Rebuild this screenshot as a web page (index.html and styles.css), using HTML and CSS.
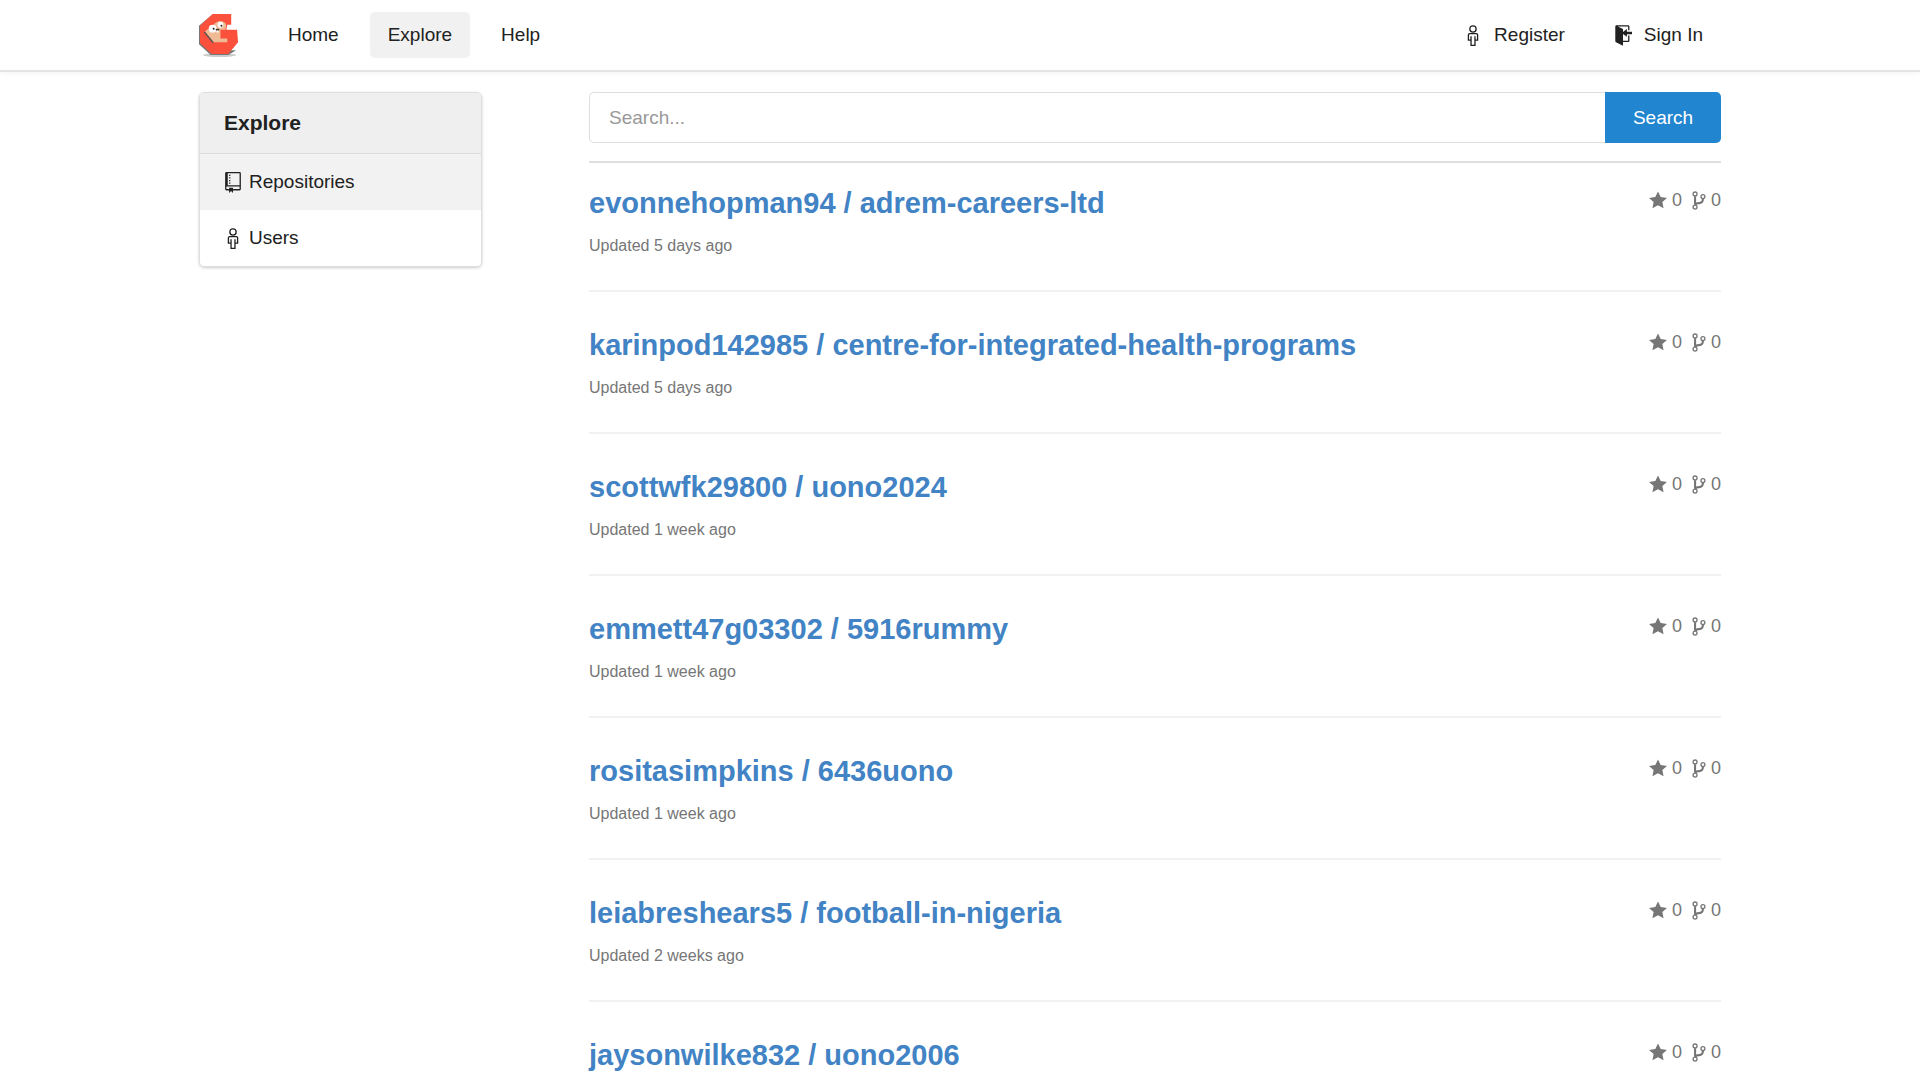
FILE: index.html
```html
<!DOCTYPE html>
<html lang="en">
<head>
  <meta charset="UTF-8" />
  <meta name="viewport" content="width=device-width, initial-scale=1.0" />
  <title>Explore - Gogs</title>
  <link rel="stylesheet" href="styles.css">
</head>
<body>
  <svg class="sprite" aria-hidden="true">
    <symbol id="person" viewBox="0 0 12 16">
      <g fill="none" stroke="currentColor">
        <circle cx="6" cy="3" r="2.4" />
        <path d="M3.5 6.5h5c.6 0 1 .4 1 1v4h-2v4h-3v-4h-2v-4c0-.6.4-1 1-1zM4.5 8.5v3M7.5 8.5v3" />
      </g>
    </symbol>
    <symbol id="sign-in" viewBox="0 0 14 16">
      <path d="M7 6.75V12h4V8h1v4c0 .55-.45 1-1 1H7v3l-5.45-2.72c-.33-.17-.55-.52-.55-.91V1c0-.55.45-1 1-1h9c.55 0 1 .45 1 1v3h-1V1H3l4 2v2.25L10 3v2h4v2h-4v2z" />
    </symbol>
    <symbol id="repo" viewBox="0 0 12 16">
      <path d="M4 9H3V8h1v1zm0-3H3v1h1V6zm0-2H3v1h1V4zm0-2H3v1h1V2zm8-1v12c0 .55-.45 1-1 1H6v2l-1.5-1.5L3 16v-2H1c-.55 0-1-.45-1-1V1c0-.55.45-1 1-1h10c.55 0 1 .45 1 1zm-1 10H1v2h2v-1h3v1h5v-2zm0-10H2v9h9V1z" />
    </symbol>
    <symbol id="star" viewBox="0 0 14 16">
      <path d="M14 6l-4.9-.64L7 1 4.9 5.36 0 6l3.6 3.26L2.67 14 7 11.67 11.33 14l-.93-4.74z" />
    </symbol>
    <symbol id="branch" viewBox="0 0 10 16">
      <g fill="none" stroke="currentColor">
        <circle cx="2" cy="3" r="1.5" />
        <circle cx="8" cy="5" r="1.5" />
        <circle cx="2" cy="13" r="1.5" />
        <path stroke-width="1.6" d="M2 4.7v6.6M8 6.7c0 2-1.3 3.3-3 3.3-1.5 0-2.500.4-3 1.400" />
      </g>
    </symbol>
  </svg>

  <header class="navbar">
    <nav class="container nav">
      <a href="#" class="brand" aria-label="Gogs">
        <svg class="logo" viewBox="0 0 42 46">
          <ellipse cx="21" cy="43" rx="17" ry="2" fill="#ccc" />
          <path fill="#777" d="M13 2 0 13v19l12 11h18l8-5H13z" />
          <path fill="#fb503c" d="M14 1h19v11h-4l-1 5h11l1 13-10 12H13L1 31V13z" />
          <path fill="#efba94" d="M15 12c4-5 10-5 13 0l-1 5h-5v9h7v4H15L6 19z" />
          <path fill="#555" d="m6 19 9 11-1 1-9-11z" />
          <circle cx="14" cy="16" r="4" fill="#fff" />
          <circle cx="22" cy="12" r="3" fill="#fff" />
          <circle cx="15" cy="16" r="1" fill="#222" />
          <circle cx="23" cy="13" r="1" fill="#222" />
          <ellipse cx="19" cy="17" rx="2" ry="1" fill="#333" />
          <path fill="#fff" d="M18 18h2v2h-2z" />
        </svg>
      </a>
      <a href="#" class="item">Home</a>
      <a href="#" class="item active">Explore</a>
      <a href="#" class="item">Help</a>
      <div class="right">
        <a href="#" class="item"><svg class="icon"><use href="#person" /></svg> Register</a>
        <a href="#" class="item"><svg class="icon"><use href="#sign-in" /></svg> Sign In</a>
      </div>
    </nav>
  </header>

  <div class="container explore">
    <aside class="menu">
      <h4 class="menu-header">Explore</h4>
      <a href="#" class="menu-item active"><svg class="icon"><use href="#repo" /></svg> Repositories</a>
      <a href="#" class="menu-item"><svg class="icon"><use href="#person" /></svg> Users</a>
    </aside>

    <main>
      <form class="search">
        <input type="text" name="q" placeholder="Search..." aria-label="Search">
        <button type="submit">Search</button>
      </form>
      <div class="list">
        <div class="repo">
          <div class="repo-header">
            <a href="#" class="name">evonnehopman94 / adrem-careers-ltd</a>
            <div class="stats"><span><svg class="icon"><use href="#star" /></svg> 0</span><span><svg class="icon fork"><use href="#branch" /></svg> 0</span></div>
          </div>
          <p class="time">Updated 5 days ago</p>
        </div>
        <div class="repo">
          <div class="repo-header">
            <a href="#" class="name">karinpod142985 / centre-for-integrated-health-programs</a>
            <div class="stats"><span><svg class="icon"><use href="#star" /></svg> 0</span><span><svg class="icon fork"><use href="#branch" /></svg> 0</span></div>
          </div>
          <p class="time">Updated 5 days ago</p>
        </div>
        <div class="repo">
          <div class="repo-header">
            <a href="#" class="name">scottwfk29800 / uono2024</a>
            <div class="stats"><span><svg class="icon"><use href="#star" /></svg> 0</span><span><svg class="icon fork"><use href="#branch" /></svg> 0</span></div>
          </div>
          <p class="time">Updated 1 week ago</p>
        </div>
        <div class="repo">
          <div class="repo-header">
            <a href="#" class="name">emmett47g03302 / 5916rummy</a>
            <div class="stats"><span><svg class="icon"><use href="#star" /></svg> 0</span><span><svg class="icon fork"><use href="#branch" /></svg> 0</span></div>
          </div>
          <p class="time">Updated 1 week ago</p>
        </div>
        <div class="repo">
          <div class="repo-header">
            <a href="#" class="name">rositasimpkins / 6436uono</a>
            <div class="stats"><span><svg class="icon"><use href="#star" /></svg> 0</span><span><svg class="icon fork"><use href="#branch" /></svg> 0</span></div>
          </div>
          <p class="time">Updated 1 week ago</p>
        </div>
        <div class="repo">
          <div class="repo-header">
            <a href="#" class="name">leiabreshears5 / football-in-nigeria</a>
            <div class="stats"><span><svg class="icon"><use href="#star" /></svg> 0</span><span><svg class="icon fork"><use href="#branch" /></svg> 0</span></div>
          </div>
          <p class="time">Updated 2 weeks ago</p>
        </div>
        <div class="repo">
          <div class="repo-header">
            <a href="#" class="name">jaysonwilke832 / uono2006</a>
            <div class="stats"><span><svg class="icon"><use href="#star" /></svg> 0</span><span><svg class="icon fork"><use href="#branch" /></svg> 0</span></div>
          </div>
        </div>
      </div>
    </main>
  </div>
</body>
</html>
```
FILE: styles.css
```css
* { box-sizing: border-box; }
body {
  margin: 0;
  font-family: "Helvetica Neue", "Liberation Sans", Arial, sans-serif;
  font-size: 19px;
  line-height: 24px;
  background: #fff;
  color: #212121;
}
a { color: inherit; text-decoration: none; }
.sprite { display: none; }
.container {
  max-width: 1522px;
  margin: 0 auto;
}
.icon {
  width: 18px;
  height: 21px;
  flex: none;
  fill: currentColor;
}
.navbar {
  border-bottom: 2px solid #e4e4e4;
  box-shadow: 0 2px 4px rgba(0, 0, 0, 0.04);
}
.nav {
  display: flex;
  align-items: center;
  gap: 13px;
  height: 70px;
}
.brand { margin-right: 17px; }
.logo {
  display: block;
  width: 41px;
  height: 45px;
}
.item {
  display: flex;
  align-items: center;
  gap: 12px;
  height: 46px;
  padding: 0 18px;
  border-radius: 5px;
}
.item.active { background: #f1f1f1; }
.right {
  display: flex;
  gap: 13px;
  margin-left: auto;
}
.explore {
  display: grid;
  grid-template-columns: 1fr 4fr;
  gap: 107px;
  align-items: start;
  padding-top: 20px;
}
.menu {
  border: 1px solid #dedede;
  border-radius: 5px;
  box-shadow: 0 1px 3px rgba(0, 0, 0, 0.2);
  overflow: hidden;
}
.menu-header {
  margin: 0;
  padding: 18px 24px;
  font-size: 21px;
  background: #efefef;
  border-bottom: 1px solid #dcdcdc;
}
.menu-item {
  display: flex;
  align-items: center;
  gap: 7px;
  padding: 16px 24px;
}
.menu-item.active { background: #f2f2f2; }
.search {
  display: flex;
  height: 51px;
}
.search input {
  flex: 1;
  min-width: 0;
  padding: 0 19px;
  font: inherit;
  border: 1px solid #dedede;
  border-right: 0;
  border-radius: 5px 0 0 5px;
  outline: none;
}
.search input::placeholder { color: #999; }
.search button {
  width: 116px;
  font: inherit;
  color: #fff;
  background: #2185d0;
  border: 0;
  border-radius: 0 5px 5px 0;
  cursor: pointer;
}
.list {
  margin-top: 18px;
  border-top: 2px solid #dfdfdf;
}
.repo {
  padding: 35px 0 34px;
  border-bottom: 2px solid #f2f2f2;
}
.repo:first-child { padding-top: 22px; }
.repo:last-child {
  padding-bottom: 0;
  border-bottom: 0;
}
.repo-header {
  display: flex;
  justify-content: space-between;
  align-items: flex-start;
}
.name {
  font-size: 29px;
  line-height: 36px;
  font-weight: bold;
  color: #4183c4;
}
.stats {
  display: flex;
  gap: 10px;
  font-size: 18px;
  line-height: 30px;
  color: #767676;
}
.stats span {
  display: flex;
  align-items: center;
  gap: 5px;
}
.stats .fork { width: 14px; }
.time {
  margin: 15px 0 0;
  font-size: 16px;
  line-height: 20px;
  color: #767676;
}
```
